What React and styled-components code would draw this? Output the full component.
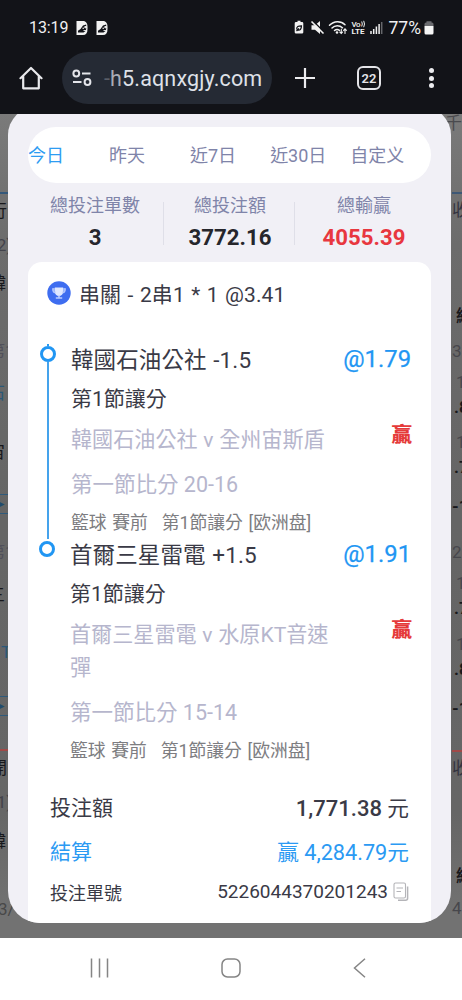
import React from 'react'
import styled, { createGlobalStyle } from 'styled-components'

const tabs = [
  { label: '今日', gap: 0, active: true },
  { label: '昨天', gap: 45 },
  { label: '近7日', gap: 45 },
  { label: '近30日', gap: 34 },
  { label: '自定义', gap: 24 },
]

const stats = [
  { label: '總投注單數', value: '3' },
  { label: '總投注額', value: '3772.16' },
  { label: '總輸贏', value: '4055.39', color: '#e8373f' },
]

const legs = [
  {
    team: '韓國石油公社 -1.5',
    odds: '@1.79',
    match: '韓國石油公社 v 全州宙斯盾',
    score: '第一節比分 20-16',
    linked: true,
  },
  {
    team: '首爾三星雷電 +1.5',
    odds: '@1.91',
    match: '首爾三星雷電 v 水原KT音速彈',
    score: '第一節比分 15-14',
  },
]

// What stays visible of the page on both sides of the dialog
const leftEdge = [
  { gap: 78, line: '#34587a' },
  { gap: 8, text: '行', x: -10 },
  { gap: 14, text: '(2)', x: -9, color: '#43434b' },
  { gap: 18, text: '韓', x: -11 },
  { gap: 48, text: '第1', x: -12, color: '#50505a' },
  { gap: 22, text: '石', x: -12, color: '#2b5878' },
  { gap: 39, text: '宙', x: -12 },
  { gap: 31, text: '▸', x: -4, color: '#214b6d', box: true },
  { gap: 29, text: '第1', x: -12, color: '#50505a' },
  { gap: 23, text: '三', x: -12 },
  { gap: 37, text: 'T', x: 1, color: '#2b5878' },
  { gap: 33, text: '▸', x: -4, color: '#214b6d', box: true },
  { gap: 33, line: '#a04a48' },
  { gap: 8, text: '開', x: -10 },
  { gap: 14, text: '(1)', x: -9, color: '#43434b' },
  { gap: 19, text: '韓', x: -11 },
  { gap: 48, text: '3/', x: -2, color: '#484848' },
]

const rightEdge = [
  { gap: 0, text: '千足', x: -7, color: '#4a4a4e' },
  { gap: 58, line: '#3e5876' },
  { gap: 7, text: '收', color: '#33333f' },
  { gap: 86, text: '總', x: 4, bold: true },
  { gap: 15, text: '3', color: '#47474c' },
  { gap: 11, text: '1', x: 4, color: '#47474c' },
  { gap: 5, text: '.8', x: 2, bold: true },
  { gap: 15, text: '1', x: 4, color: '#47474c' },
  { gap: 5, text: '.7', x: 2, bold: true },
  { gap: 19, text: '-1', x: 0, bold: true },
  { gap: 26, text: '2', color: '#47474c' },
  { gap: 11, text: '1', x: 4, color: '#47474c' },
  { gap: 5, text: '.7', x: 2, bold: true },
  { gap: 16, text: '1', x: 4, color: '#47474c' },
  { gap: 5, text: '.8', x: 2, bold: true },
  { gap: 19, text: '-1', x: 0, bold: true },
  { gap: 31, line: '#a04a48' },
  { gap: 7, text: '收', color: '#33333f' },
  { gap: 88, text: '總', x: 4, bold: true },
  { gap: 12, text: '4', color: '#47474c' },
]

const NoteIcon = () => (
  <svg width="12" height="14" viewBox="0 0 12 14">
    <path d="M.5 0H7c3 0 4.500 2.500 4.500 6v2c0 4-1.500 6-4.500 6H.5Z" fill="#f2f2f2" />
    <path d="M2 11.500V9.800L4.500 8 7 4.500l3.200-1V8l-.7 2-2 1.500Z" fill="#121318" />
    <circle cx="7.200" cy="7.300" r=".8" fill="#f2f2f2" />
    <path d="M8.800 5.500h1.700v1.300H8.800ZM7.500 9.500h2.500" stroke="#f2f2f2" strokeWidth=".9" fill="#f2f2f2" />
  </svg>
)

const StatusIcons = () => (
  <svg width="90" height="18" viewBox="0 0 90 18">
    <path d="M3 3h1.500V1.800h3V3H9a1.300 1.300 0 0 1 1.300 1.300v9A1.300 1.300 0 0 1 9 14.600H3a1.300 1.300 0 0 1-1.300-1.300v-9A1.300 1.300 0 0 1 3 3Z" fill="#f2f2f2" />
    <path d="M3.800 10.500c-.4-3 1.500-3.600 4.600-3.600 0 3-1.200 4.800-3.600 4.200m-1.300.9 2.500-2.500" stroke="#121318" strokeWidth="1.300" fill="none" />
    <path d="M18.500 6.300h3.500l5-4.300v13l-5-4.300h-3.500Z" fill="#f2f2f2" />
    <path d="m19.500 1.500 12 12" stroke="#121318" strokeWidth="1.600" />
    <path d="m18.500 2.500 12 12" stroke="#f2f2f2" strokeWidth="1.600" />
    <g fill="none" stroke="#f2f2f2" strokeWidth="1.500" strokeLinecap="round">
      <path d="M36.500 6.300c4.500-4.700 11.500-4.700 15.500-.5M39 9c3-3 7.500-3 10.500-.2M41.500 11.500c1.500-1.300 3.500-1.300 5-.2" />
      <path d="M48.300 10v4.500m-1.500-1.500 1.500 1.500 1.300-1.500M52 14.500V9.800m-1.400 1.500 1.400-1.500 1.400 1.500" strokeWidth="1.100" />
    </g>
    <circle cx="44" cy="13.500" r="1.300" fill="#f2f2f2" />
    <text x="58.500" y="8" fontSize="8" fontWeight="500" textLength="9" fill="#f2f2f2">Vo</text>
    <path d="M68.700 2.500q1.200 2.500 0 5M70.700 1.800q1.600 3.200 0 6.400" stroke="#f2f2f2" fill="none" />
    <text x="58.500" y="15.300" fontSize="8" fontWeight="700" textLength="13" lengthAdjust="spacingAndGlyphs" fill="#f2f2f2">LTE</text>
    <path d="M78 12v3M80.700 10v5M83.400 7.500v7.500M86.100 5v10" stroke="#f2f2f2" strokeWidth="1.500" />
    <path d="M88.700 3v12" stroke="#66676b" strokeWidth="1.500" />
  </svg>
)

const BatteryIcon = () => (
  <svg width="10" height="14" viewBox="0 0 10 14">
    <path d="M2.500 1.500V.3h5v1.200H8A1.500 1.500 0 0 1 9.500 3v2h-9V3A1.500 1.500 0 0 1 2 1.500Z" fill="#6a6b6f" />
    <path d="M.5 5h9v7A1.500 1.500 0 0 1 8 13.500H2A1.500 1.500 0 0 1 .5 12Z" fill="#f5f5f5" />
  </svg>
)

const HomeIcon = () => (
  <svg width="24" height="24" viewBox="0 0 24 24" fill="none" stroke="#e9e9ec" strokeWidth="2.200" strokeLinecap="round" strokeLinejoin="round">
    <path d="M1.500 12.200 12 2l10.500 10.200M4.200 10v12.300h15.600V10" />
  </svg>
)

const SiteIcon = () => (
  <svg width="20" height="18" viewBox="0 0 20 18" fill="none" stroke="#e4e5ea" strokeWidth="2">
    <circle cx="4.300" cy="4.500" r="2.900" />
    <path d="M10 4.500h8.500M1 13h8.500" />
    <circle cx="15.500" cy="13" r="2.900" />
  </svg>
)

const PlusIcon = () => (
  <svg width="22" height="22" viewBox="0 0 22 22">
    <path d="M11 1v20M1 11h20" stroke="#ececef" strokeWidth="2.200" />
  </svg>
)

const TrophyIcon = () => (
  <svg width="24" height="24" viewBox="0 0 24 24">
    <circle cx="12" cy="12" r="11.700" fill="#3e6df0" />
    <path d="M7.800 6.500h8.400v4.200c0 2.500-1.800 4.300-4.200 4.300s-4.200-1.800-4.200-4.300Z" fill="#dfe8ff" />
    <path d="M7.800 7.800H5.700c0 2.500.8 4 2.700 4.200M16.200 7.800h2.100c0 2.500-.8 4-2.700 4.200" stroke="#b9cbff" strokeWidth="1.100" fill="#9db6fb" />
    <path d="M11.200 14.500h1.600v1.800h2.400v1.500H8.800v-1.500h2.400Z" fill="#b9cbff" />
  </svg>
)

const CopyIcon = () => (
  <svg width="16" height="20" viewBox="0 0 16 20" fill="none" stroke="#b4b4b8" strokeWidth="1.100">
    <rect x="1" y="1" width="11.500" height="15" rx="1.500" />
    <path d="M3.500 6h6.500M3.500 9.500h4.500" />
    <path d="M14.600 4.500v11.700a2 2 0 0 1-2 2H5" strokeWidth="1.500" />
  </svg>
)

const PageEdge = ({ items }) => (
  <Edge>
    {items.map((item, index) =>
      item.line ? (
        <EdgeLine key={index} $gap={item.gap} $color={item.line} />
      ) : (
        <EdgeText key={index} $gap={item.gap} $x={item.x} $color={item.color} $bold={item.bold} $box={item.box}>
          {item.text}
        </EdgeText>
      )
    )}
  </Edge>
)

const BetLeg = ({ leg }) => (
  <LegWrapper $linked={leg.linked}>
    <Rail>
      <RailStub $linked={leg.linked} />
      <RailDot />
      {leg.linked && <RailLine />}
    </Rail>
    <LegBody>
      <TeamName>{leg.team}</TeamName>
      <Market>第1節讓分</Market>
      <MatchName>{leg.match}</MatchName>
      <Score>{leg.score}</Score>
      <Info>
        <span>籃球 賽前</span>
        <span>第1節讓分 [欧洲盘]</span>
      </Info>
    </LegBody>
    <LegResult>
      <Odds>{leg.odds}</Odds>
      <Win>贏</Win>
    </LegResult>
  </LegWrapper>
)

const App = () => {
  return (
    <>
      <GlobalStyle />
      <Screen>
        <TopArea>
          <StatusBar>
            <Clock>13:19</Clock>
            <NoteIcon />
            <NoteIcon />
            <StatusRight>
              <StatusIcons />
              <Battery>77%</Battery>
              <BatteryIcon />
            </StatusRight>
          </StatusBar>
          <Toolbar>
            <HomeIcon />
            <UrlBar>
              <SiteIcon />
              <Url>
                <Faded>-</Faded>
                <HalfFaded>h</HalfFaded>5.aqnxgjy.com
              </Url>
            </UrlBar>
            <PlusIcon />
            <TabCount>22</TabCount>
            <MenuDots>
              <i />
              <i />
              <i />
            </MenuDots>
          </Toolbar>
        </TopArea>

        <Stage>
          <Backdrop>
            <PageEdge items={leftEdge} />
            <PageEdge items={rightEdge} />
          </Backdrop>
          <Modal>
            <TabBar>
              {tabs.map((tab) => (
                <Tab key={tab.label} $gap={tab.gap} $active={tab.active}>
                  {tab.label}
                </Tab>
              ))}
            </TabBar>
            <Stats>
              {stats.map((stat) => (
                <Stat key={stat.label}>
                  <StatLabel>{stat.label}</StatLabel>
                  <StatValue $color={stat.color}>{stat.value}</StatValue>
                </Stat>
              ))}
            </Stats>
            <Card>
              <CardHeader>
                <TrophyIcon />
                <span>串關 - 2串1 * 1 @3.41</span>
              </CardHeader>
              {legs.map((leg) => (
                <BetLeg key={leg.team} leg={leg} />
              ))}
              <Summary>
                <SummaryRow>
                  <span>投注額</span>
                  <Amount>
                    <b>1,771.38</b> 元
                  </Amount>
                </SummaryRow>
                <SummaryRow $blue>
                  <span>結算</span>
                  <Amount>贏 4,284.79元</Amount>
                </SummaryRow>
                <SummaryRow $small>
                  <span>投注單號</span>
                  <BetNumber>
                    5226044370201243
                    <CopyIcon />
                  </BetNumber>
                </SummaryRow>
              </Summary>
            </Card>
          </Modal>
        </Stage>

        <NavBar>
          <svg width="20" height="20" viewBox="0 0 20 20" stroke="#858585" strokeWidth="1.500">
            <path d="M1.500 .5v19M9.500 .5v19M17.500 .5v19" />
          </svg>
          <svg width="20" height="20" viewBox="0 0 20 20" fill="none" stroke="#858585" strokeWidth="1.500">
            <rect x="1" y="1" width="18" height="18" rx="5.500" />
          </svg>
          <svg width="14" height="20" viewBox="0 0 14 20" fill="none" stroke="#858585" strokeWidth="1.500">
            <path d="M13 .7 2.500 10 13 19.300" />
          </svg>
        </NavBar>
      </Screen>
    </>
  )
}

const GlobalStyle = createGlobalStyle`
  * {
    box-sizing: border-box;
  }
  body {
    margin: 0;
    font-family: Roboto, 'Noto Sans CJK TC', sans-serif;
  }
  svg {
    display: block;
    flex-shrink: 0;
  }
`

const Screen = styled.div`
  display: flex;
  flex-direction: column;
  width: 462px;
  height: 1000px;
  overflow: hidden;
`

const TopArea = styled.div`
  height: 114px;
  background: #121318;
`

const StatusBar = styled.div`
  display: flex;
  align-items: center;
  gap: 8px;
  height: 52px;
  padding: 3px 28px 0 29px;
  color: #f0f0f2;
`

const Clock = styled.span`
  width: 39px;
  font-size: 16px;
  letter-spacing: -0.1px;
  white-space: nowrap;
`

const StatusRight = styled.div`
  display: flex;
  align-items: center;
  margin-left: auto;
`

const Battery = styled.span`
  margin: 0 3px 0 6px;
  font-size: 17.5px;
`

const Toolbar = styled.div`
  display: flex;
  align-items: center;
  height: 52px;
  padding: 0 28px 0 19px;
`

const UrlBar = styled.div`
  display: flex;
  align-items: center;
  gap: 12px;
  width: 210px;
  height: 52px;
  margin: 0 22px 0 19px;
  padding-left: 10px;
  border-radius: 26px;
  background: #252a34;
  color: #dfe1e8;
`

const Url = styled.span`
  font-size: 21.5px;
  letter-spacing: 0.15px;
  white-space: nowrap;
`

const Faded = styled.span`
  color: #5a5e68;
`

const HalfFaded = styled.span`
  color: #a9acb4;
`

const TabCount = styled.div`
  display: flex;
  align-items: center;
  justify-content: center;
  width: 24px;
  height: 24px;
  margin-left: 41px;
  border: 2px solid #e4e4e8;
  border-radius: 6px;
  color: #e4e4e8;
  font-size: 13px;
  font-weight: 600;
`

const MenuDots = styled.div`
  display: flex;
  flex-direction: column;
  gap: 2.5px;
  margin-left: auto;

  i {
    width: 5px;
    height: 5px;
    border-radius: 50%;
    background: #ececef;
  }
`

const Stage = styled.div`
  display: grid;
  grid-template-columns: 462px;
  grid-template-rows: 824px;
  height: 824px;
  overflow: hidden;
`

const Backdrop = styled.div`
  grid-area: 1 / 1;
  display: flex;
  justify-content: space-between;
  background: linear-gradient(#7a7a7a, #6c6c6c 130px, #656565 400px, #666 700px, #727272 800px);
  overflow: hidden;
`

const Edge = styled.div`
  width: 10px;
`

const EdgeLine = styled.div`
  height: 2px;
  margin-top: ${({ $gap }) => $gap}px;
  background: ${({ $color }) => $color};
`

const EdgeText = styled.div`
  height: 20px;
  margin-top: ${({ $gap }) => $gap}px;
  text-indent: ${({ $x }) => $x || 0}px;
  border: solid #2f5a7b;
  border-width: ${({ $box }) => ($box ? '1px 0' : 0)};
  color: ${({ $color }) => $color || '#18181c'};
  font-size: 17px;
  font-weight: ${({ $bold }) => ($bold ? 700 : 400)};
  line-height: ${({ $box }) => ($box ? 17 : 19)}px;
  white-space: nowrap;
`

const Modal = styled.div`
  grid-area: 1 / 1;
  z-index: 1;
  display: flex;
  flex-direction: column;
  width: 443px;
  height: 816px;
  margin: -7px 0 0 8px;
  padding: 20px 20px 0;
  border-radius: 28px 28px 32px 32px;
  background: #f1f0f6;
  overflow: hidden;
`

const TabBar = styled.div`
  display: flex;
  align-items: center;
  height: 56px;
  flex-shrink: 0;
  padding-bottom: 3px;
  border-radius: 28px;
  background: #fff;
`

const Tab = styled.div`
  margin-left: ${({ $gap }) => $gap}px;
  color: ${({ $active }) => ($active ? '#2e9cf2' : '#7f84a9')};
  font-size: 18px;
  white-space: nowrap;
`

const Stats = styled.div`
  display: grid;
  grid-template-columns: 136px 131px 136px;
  height: 79px;
  flex-shrink: 0;
  padding: 19px 0 17px;
`

const Stat = styled.div`
  display: flex;
  flex-direction: column;
  align-items: center;
  height: 43px;
  border-right: 1px solid #dfdfe8;

  &:first-child {
    padding-right: 1px;
  }

  &:nth-child(2) {
    padding-left: 2px;
  }

  &:last-child {
    border-right: 0;
    padding-left: 2px;
  }
`

const StatLabel = styled.div`
  margin-top: -9px;
  color: #7f84a9;
  font-size: 18px;
  line-height: 26px;
`

const StatValue = styled.div`
  margin-top: 4px;
  color: ${({ $color }) => $color || '#26262c'};
  font-size: 22.2px;
  font-weight: 700;
  line-height: 28px;
`

const Card = styled.div`
  flex: 1;
  border-radius: 14px 14px 0 0;
  background: #fff;
  color: #3a3a46;
`

const CardHeader = styled.div`
  display: flex;
  align-items: center;
  gap: 8px;
  height: 62px;
  margin-bottom: 15px;
  padding-left: 19px;
  font-size: 21px;
  letter-spacing: 0.1px;
  word-spacing: 1.1px;
`

const LegWrapper = styled.div`
  display: flex;
  padding-right: 19px;
  padding-left: ${({ $linked }) => ($linked ? 11 : 10)}px;
`

const Rail = styled.div`
  display: flex;
  flex-direction: column;
  align-items: center;
  width: 17px;
  margin: 5px 15px -5px 0;
`

const RailStub = styled.div`
  width: 2px;
  height: 2px;
  background: ${({ $linked }) => ($linked ? '#2b9af0' : 'transparent')};
`

const RailDot = styled.div`
  width: 16px;
  height: 16px;
  flex-shrink: 0;
  border: 3.5px solid #2196f3;
  border-radius: 50%;
`

const RailLine = styled.div`
  width: 2px;
  flex: 1;
  background: #45a3ec;
`

const LegBody = styled.div`
  width: 264px;
  margin: 1px 0 -1px;
  white-space: nowrap;
`

const TeamName = styled.div`
  font-size: 22.5px;
  line-height: 40px;
  word-spacing: 1px;
  letter-spacing: 0.1px;
`

const Market = styled.div`
  font-size: 21px;
  line-height: 38px;
`

const MatchName = styled.div`
  margin-top: 5px;
  color: #b6b6cd;
  font-size: 21.1px;
  line-height: 33px;
  word-spacing: 0.5px;
  white-space: normal;
`

const Score = styled.div`
  margin-top: 13px;
  color: #b6b6cd;
  font-size: 21.5px;
  line-height: 32px;
`

const Info = styled.div`
  display: flex;
  gap: 14px;
  margin-top: 10px;
  color: #7d7d81;
  font-size: 17.8px;
  line-height: 24px;
  word-spacing: 1.2px;
`

const LegResult = styled.div`
  display: flex;
  flex: 1;
  flex-direction: column;
  align-items: flex-end;
`

const Odds = styled.div`
  margin-right: 1px;
  color: #2196f3;
  font-size: 23.8px;
  font-weight: 400;
  -webkit-text-stroke: 0.25px #2196f3;
  line-height: 41px;
`

const Win = styled.div`
  margin-top: 43px;
  color: #e53a3a;
  font-size: 20.5px;
  font-weight: 900;
  line-height: 24px;
`

const Summary = styled.div`
  margin-top: 22px;
  padding: 0 22px;
`

const SummaryRow = styled.div`
  display: flex;
  align-items: center;
  justify-content: space-between;
  height: ${({ $small }) => ($small ? 39 : 44)}px;
  color: ${({ $blue }) => ($blue ? '#2b9af3' : '#3a3a46')};
  font-size: ${({ $small }) => ($small ? 18 : 21)}px;
`

const Amount = styled.span`
  font-size: 21.7px;

  b {
    font-weight: 500;
    font-size: 22px;
  }
`

const BetNumber = styled.span`
  display: flex;
  align-items: center;
  gap: 5px;
  font-size: 19px;
`

const NavBar = styled.div`
  display: flex;
  align-items: center;
  justify-content: space-between;
  height: 62px;
  padding: 0 96px 2px 90px;
  background: #fff;
`

export default App
